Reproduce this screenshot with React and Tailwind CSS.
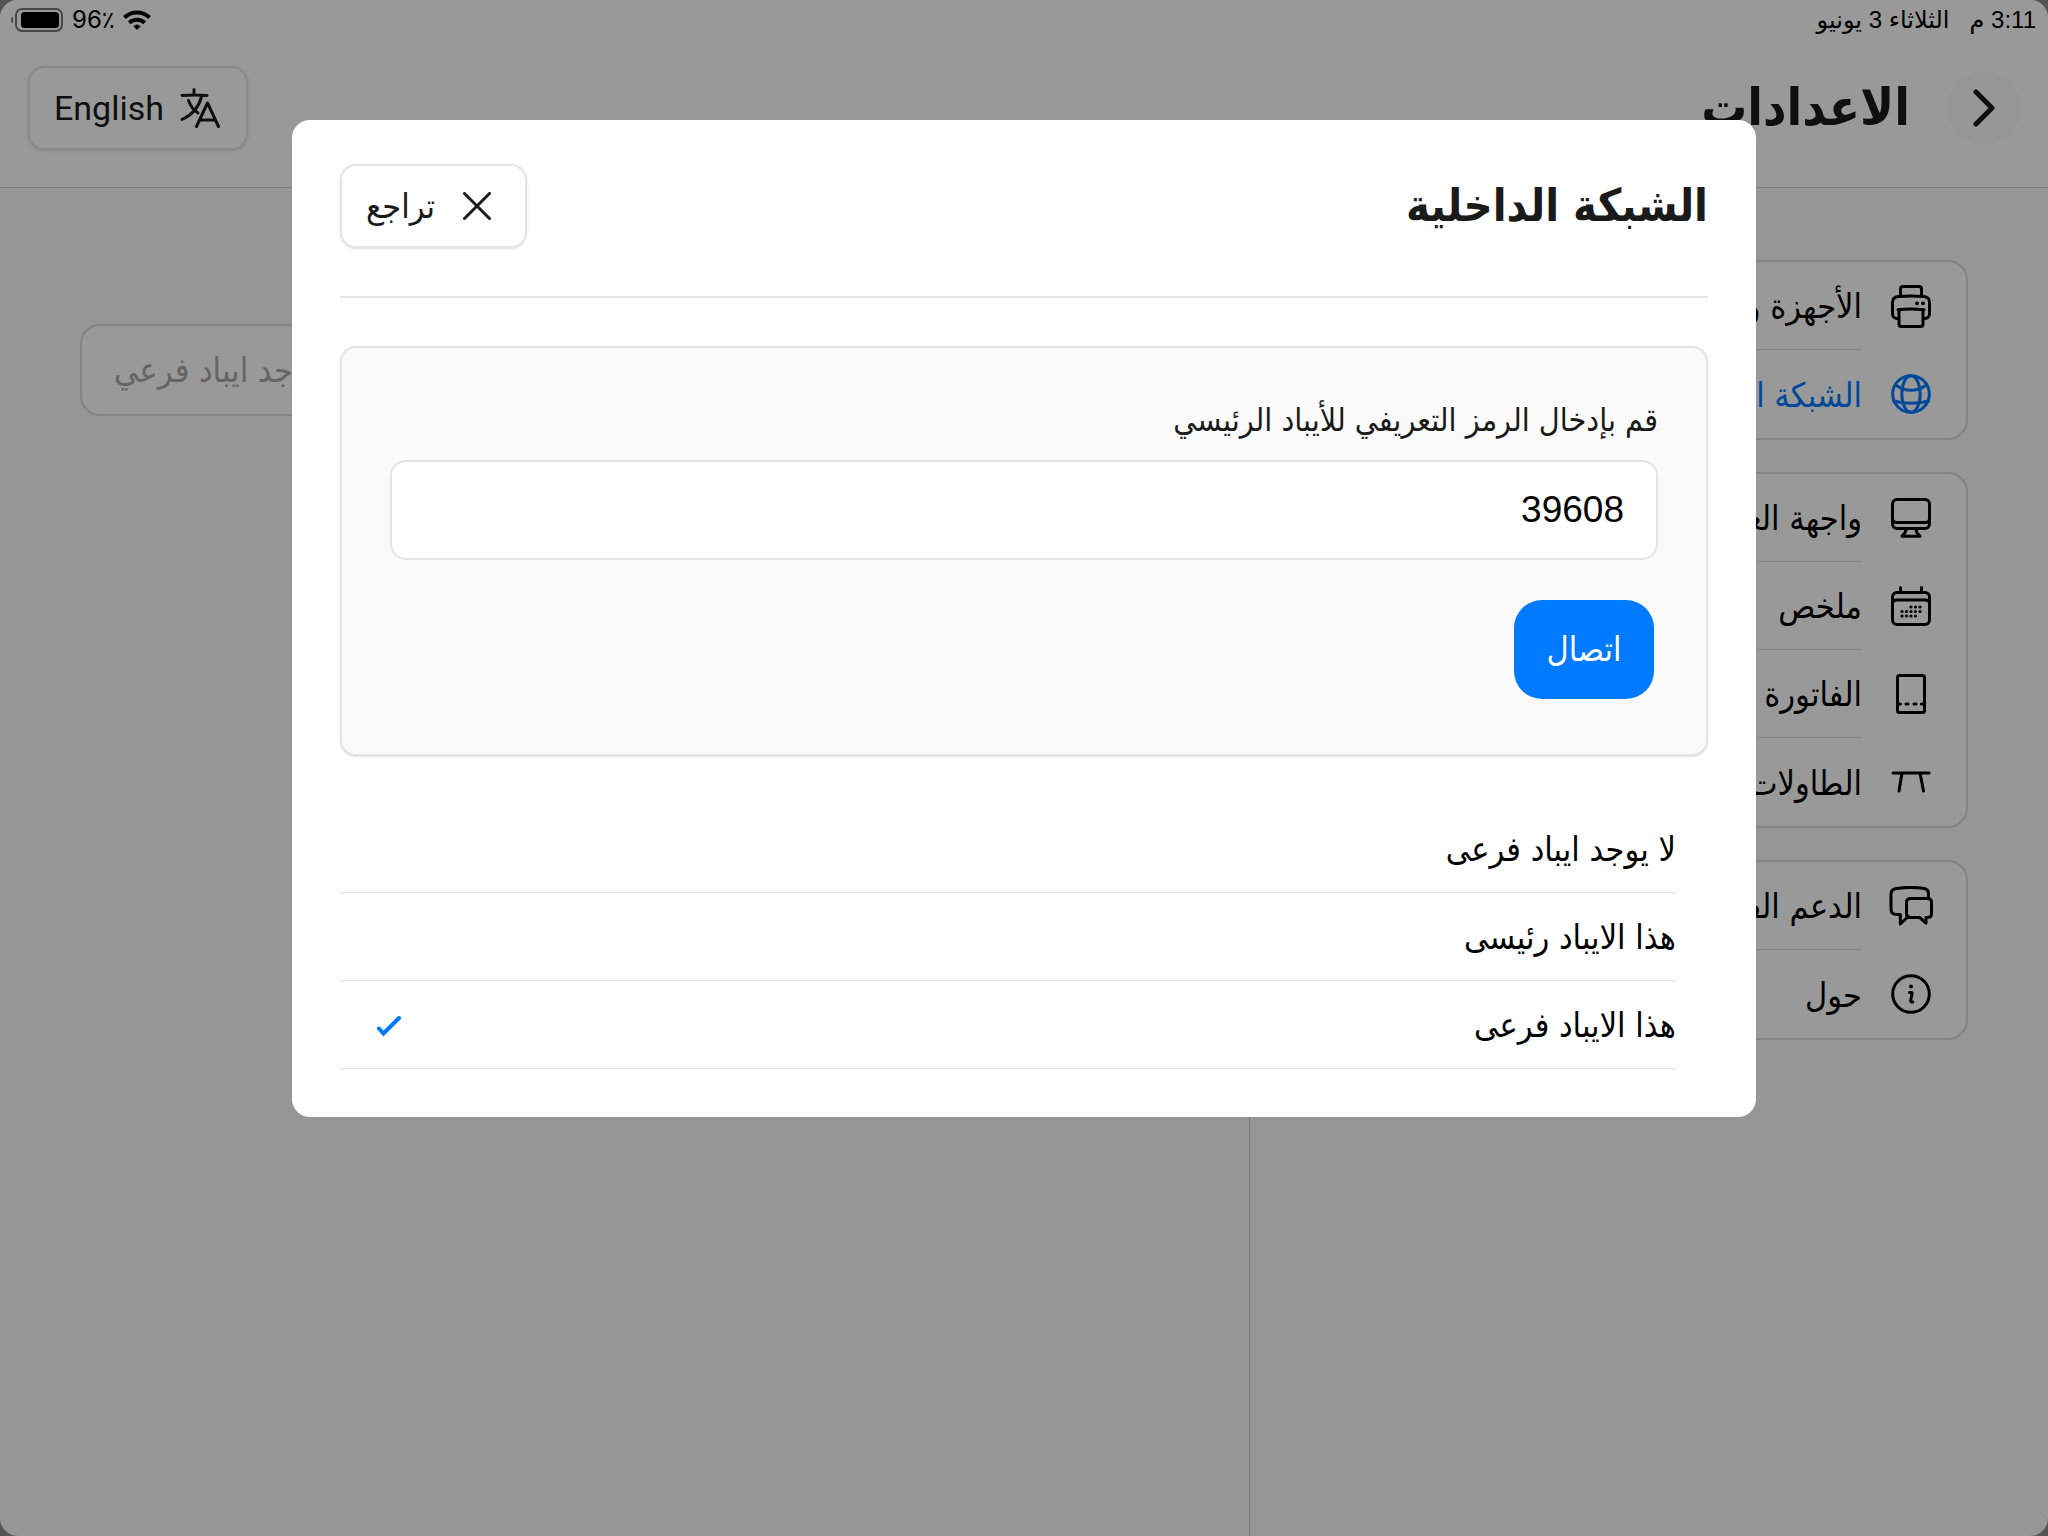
import React, { useState } from 'react';

const stroke = {
  fill: 'none',
  stroke: 'currentColor',
  strokeWidth: 3,
  strokeLinecap: 'round',
  strokeLinejoin: 'round',
};

const PrinterIcon = () => (
  <svg viewBox="0 0 40 43" className="w-10 h-[43px]" {...stroke}>
    <path d="M9.5 11V4A2.5 2.5 0 0 1 12 1.5h16A2.5 2.5 0 0 1 30.5 4v7" />
    <path d="M7.5 33.5H6A4.5 4.5 0 0 1 1.5 29V17.5c0-4 1.7-5.6 5.7-6 8-.7 17.6-.7 25.6 0 4 .4 5.7 2 5.7 6V29a4.5 4.5 0 0 1-4.5 4.5h-1.5" />
    <path d="M8 25v14.3a2.2 2.2 0 0 0 2.2 2.2h19.6a2.2 2.2 0 0 0 2.2-2.2V25" />
    <path d="M7 24.7q13-1.5 26 0" />
    <circle cx="26" cy="18.3" r="1.9" fill="currentColor" stroke="none" />
    <circle cx="32" cy="18.3" r="1.9" fill="currentColor" stroke="none" />
  </svg>
);

const GlobeIcon = () => (
  <svg viewBox="0 0 40 40" className="w-10 h-10" {...stroke}>
    <circle cx="20" cy="20" r="18.3" />
    <ellipse cx="20" cy="20" rx="9.2" ry="18.3" />
    <path d="M4.5 11q15.5 10.5 31 0M2.5 27q17.5 4.5 35 0" />
  </svg>
);

const MonitorIcon = () => (
  <svg viewBox="0 0 40 40" className="w-10 h-10" {...stroke}>
    <rect x="1.5" y="1.5" width="37" height="29" rx="4.5" />
    <path d="M1.5 21q0 3.5 4 3.5h29q4 0 4-3.5M15 31q0 4-4 7.2h18q-4-3.2-4-7.2" />
  </svg>
);

const calendarDots = [
  [20, 21], [24.5, 21], [29, 21],
  [11, 25.5], [15.5, 25.5], [20, 25.5], [24.5, 25.5], [29, 25.5],
  [11, 30], [15.5, 30], [20, 30], [24.5, 30],
];

const CalendarIcon = () => (
  <svg viewBox="0 0 40 40" className="w-10 h-10" {...stroke}>
    <rect x="1.5" y="6.5" width="37" height="32" rx="4.5" />
    <path d="M9.5 1.5V6M30.5 1.5V6M1.5 17.5q0-3.5 4-3.5h29q4 0 4 3.5" />
    {calendarDots.map(([x, y]) => (
      <circle key={`${x}-${y}`} cx={x} cy={y} r="1.6" fill="currentColor" stroke="none" />
    ))}
  </svg>
);

const InvoiceIcon = () => (
  <svg viewBox="0 0 40 40" className="w-10 h-10" {...stroke}>
    <rect x="6.5" y="1.5" width="27" height="37" rx="2" />
    <path d="M7 30h2.5M15 30h2M23 30h2M30.5 30H33" />
  </svg>
);

const TableIcon = () => (
  <svg viewBox="0 0 40 40" className="w-10 h-10" {...stroke}>
    <path d="M2 11h36M11 11 8 29M29 11l3.5 18" />
  </svg>
);

const ChatIcon = () => (
  <svg viewBox="0 0 44 40" className="w-11 h-10" {...stroke}>
    <path d="M39.5 12V8c0-3.5-2-5.5-5.5-5.8-8-1-18.5-.8-26.5.2C4 2.9 2 4.7 2 8v15c0 3.5 2 5.5 5.5 5.5h3.8V38l8-7.5" />
    <path d="M21.5 12.5h17c2.5 0 4 1.5 4 4v11c0 2.5-1.5 4-4 4H37V37l-6.5-5.5h-9c-2.5 0-4-1.5-4-4v-11c0-2.5 1.5-4 4-4z" />
  </svg>
);

const InfoIcon = () => (
  <svg viewBox="0 0 40 40" className="w-10 h-10" {...stroke}>
    <circle cx="20" cy="20" r="18.3" />
    <circle cx="20" cy="12.5" r="2" fill="currentColor" stroke="none" />
    <path d="M18.5 18.5h1.8q1 0 .8 1l-1.4 7q-.2 1.7 1.3 1.5h.8" />
  </svg>
);

const TranslateIcon = () => (
  <svg viewBox="0 0 40 40" className="w-10 h-10" {...stroke}>
    <path d="M14 1.5v5M2 7.5q12-1 25 0M21.5 8.5C19 19 12 27 2 31.5M8.5 12.5c2 5.5 5 9.5 9.5 12.5" />
    <path d="M16.5 38.5 27.5 15l11 23.5M20 32h15" />
  </svg>
);

const WifiIcon = () => (
  <svg viewBox="0 0 28 20" className="w-7 h-5" fill="none" stroke="currentColor" strokeWidth="4">
    <path d="M1.5 7.5a18 18 0 0 1 25 0M6.3 12.8a11.3 11.3 0 0 1 15.4 0" />
    <path d="M14 20l-3.6-3.8a5.4 5.4 0 0 1 7.2 0z" fill="currentColor" stroke="none" />
  </svg>
);

const BatteryIcon = () => (
  <svg viewBox="0 0 54 24" className="w-[54px] h-6">
    <path d="M3 8.5v7a4 4 0 0 1 0-7z" fill="#777" />
    <rect x="6" y="1" width="46" height="22" rx="6" fill="none" stroke="#777" strokeWidth="2" />
    <rect x="11" y="4" width="38" height="16" rx="3.5" fill="#000" />
  </svg>
);

const groups = [
  [
    { id: 'devices', label: 'الأجهزة والطابعات', Icon: PrinterIcon },
    { id: 'network', label: 'الشبكة الداخلية', Icon: GlobeIcon },
  ],
  [
    { id: 'pos', label: 'واجهة العرض', Icon: MonitorIcon },
    { id: 'summary', label: 'ملخص', Icon: CalendarIcon },
    { id: 'invoice', label: 'الفاتورة', Icon: InvoiceIcon },
    { id: 'tables', label: 'الطاولات', Icon: TableIcon },
  ],
  [
    { id: 'support', label: 'الدعم الفني', Icon: ChatIcon },
    { id: 'about', label: 'حول', Icon: InfoIcon },
  ],
];

const modes = ['لا يوجد ايباد فرعى', 'هذا الايباد رئيسى', 'هذا الايباد فرعى'];

const StatusBar = () => (
  <div className="flex items-center justify-between h-10 bg-white pr-3 pl-2.5 text-2xl text-black">
    <div className="flex items-center gap-5 font-['Liberation_Sans','DejaVu_Sans',sans-serif]">
      <span>3:11 م</span>
      <span>الثلاثاء 3 يونيو</span>
    </div>
    <div className="flex items-center gap-2 font-['Inter','DejaVu_Sans',sans-serif]">
      <WifiIcon />
      <span dir="ltr">96٪</span>
      <BatteryIcon />
    </div>
  </div>
);

const Header = () => (
  <header className="flex items-start justify-between h-[148px] bg-white border-b border-[#c8c8c8] pt-[26px] px-7">
    <div className="flex items-center gap-[38px] h-[84px]">
      <button aria-label="رجوع" className="flex items-center justify-center w-[72px] h-[72px] rounded-full bg-[#fafafa]">
        <svg viewBox="0 0 22 38" className="w-[22px] h-[38px]" {...stroke} strokeWidth="5">
          <path d="M3 3l16 16L3 35" />
        </svg>
      </button>
      <h1 className="text-[51px] leading-[72px] font-bold">الاعدادات</h1>
    </div>
    <button className="flex items-center gap-4 h-[84px] pr-[26px] pl-6 border-2 border-[#e4e4e4] rounded-2xl shadow-sm">
      <TranslateIcon />
      <span className="font-['Roboto',sans-serif] text-[34px]">English</span>
    </button>
  </header>
);

const SideMenu = () => (
  <nav className="w-[39%] px-20 pt-[72px] border-l border-[#c8c8c8] space-y-8">
    {groups.map((items, g) => (
      <ul key={g} className="bg-white border-2 border-[#dcdcdc] rounded-[20px]">
        {items.map(({ id, label, Icon }, i) => (
          <li key={id}>
            <a href={`#${id}`} className={`flex items-center h-[88px] ${id === 'network' ? 'text-[#007aff]' : 'text-black'}`}>
              <span className="flex items-center justify-center w-[104px] h-full pr-1.5">
                <Icon />
              </span>
              <span className={`flex-1 flex items-center h-full pt-0.5 text-[34px] ${i < items.length - 1 ? 'border-b border-[#dedede]' : ''}`}>
                {label}
              </span>
            </a>
          </li>
        ))}
      </ul>
    ))}
  </nav>
);

const NetworkModal = () => {
  const [mode, setMode] = useState(2);
  const [code, setCode] = useState('39608');

  return (
    <div className="fixed inset-0 bg-black/40 pt-[120px] px-8">
      <section role="dialog" aria-labelledby="modal-title" className="mx-auto w-full max-w-[1464px] bg-white rounded-[18px] px-12 pt-11 pb-12">
        <div className="flex items-start justify-between h-[134px] border-b-2 border-[#e4e4e4]">
          <h2 id="modal-title" className="text-[45px] leading-[84px] font-bold">الشبكة الداخلية</h2>
          <button className="flex items-center gap-7 h-[84px] pr-[34px] pl-6 border-2 border-[#e4e4e4] rounded-2xl shadow-sm text-[34px]">
            <svg viewBox="0 0 28 28" className="w-7 h-7" {...stroke}>
              <path d="M1.5 1.5l25 25M26.5 1.5l-25 25" />
            </svg>
            <span>تراجع</span>
          </button>
        </div>

        <div className="mt-12 h-[410px] px-12 pt-12 bg-[#fafafa] border-2 border-[#e4e4e4] rounded-2xl shadow-sm">
          <label htmlFor="code" className="block h-16 pt-1 text-[32px] leading-[40px]">قم بإدخال الرمز التعريفي للأيباد الرئيسي</label>
          <input
            id="code"
            value={code}
            onChange={(e) => setCode(e.target.value)}
            className="block w-full h-[100px] px-8 bg-white border-2 border-[#e4e4e4] rounded-2xl font-['Liberation_Sans',sans-serif] text-[37px] text-black"
          />
          <button className="mt-10 mr-1 w-[140px] h-[99px] bg-[#007aff] text-white text-[34px] rounded-[28px]">اتصال</button>
        </div>

        <ul className="mt-[49px] pr-8">
          {modes.map((label, i) => (
            <li key={label} className="border-b border-[#e2e2e2]">
              <button onClick={() => setMode(i)} className="flex items-center justify-between w-full h-[87px] pt-0.5 pl-9 text-[34px] text-black">
                <span>{label}</span>
                {mode === i && (
                  <svg viewBox="0 0 26 22" className="w-[26px] h-[22px] text-[#007aff]" {...stroke} strokeWidth="4">
                    <path d="M3 13.5l4.5 5L23 3" strokeLinejoin="miter" />
                  </svg>
                )}
              </button>
            </li>
          ))}
        </ul>
      </section>
    </div>
  );
};

const App = () => {
  return (
    <div className="min-h-screen bg-[#8d8d8d] text-[#1a1a1a] font-['DejaVu_Sans_Condensed','DejaVu_Sans',sans-serif]" dir="rtl">
      <div className="flex flex-col min-h-screen bg-[#fafafa] rounded-[18px] overflow-hidden">
        <StatusBar />
        <Header />
        <div className="flex flex-1">
          <SideMenu />
          <main className="flex-1 px-20 pt-[136px]">
            <button className="flex items-center justify-end w-full h-[92px] px-8 bg-white border-2 border-[#dcdcdc] rounded-[20px] text-[34px] text-[#a8a8a8]">
              لا يوجد ايباد فرعي
            </button>
          </main>
        </div>
      </div>
      <NetworkModal />
    </div>
  );
};

export default App;
